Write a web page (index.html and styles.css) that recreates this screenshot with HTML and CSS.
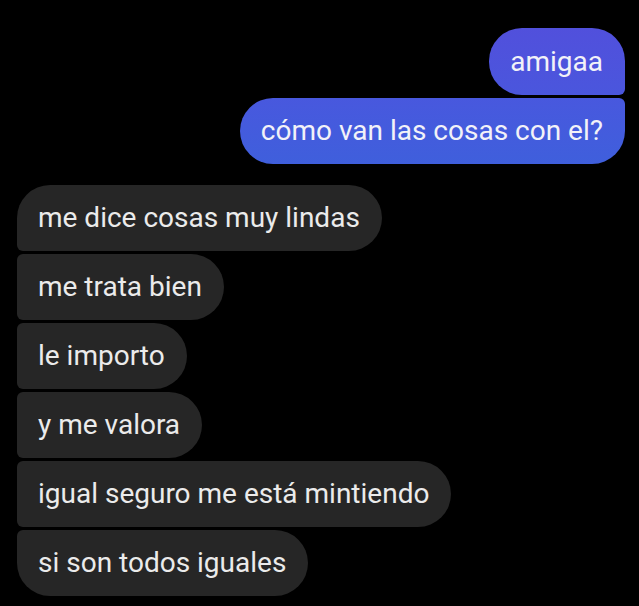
FILE: index.html
```html
<!DOCTYPE html>
<html>
<head>
<meta charset="utf-8">
<link rel="stylesheet" href="styles.css">
</head>
<body>
<div class="chat">
  <div class="group out">
    <div class="bubble out first">amigaa</div>
    <div class="bubble out last">cómo van las cosas con el?</div>
  </div>
  <div class="group in">
    <div class="bubble in first">me dice cosas muy lindas</div>
    <div class="bubble in mid">me trata bien</div>
    <div class="bubble in mid">le importo</div>
    <div class="bubble in mid">y me valora</div>
    <div class="bubble in mid">igual seguro me está mintiendo</div>
    <div class="bubble in last">si son todos iguales</div>
  </div>
</div>
</body>
</html>
```
FILE: styles.css
```css
html, body {
  margin: 0;
  padding: 0;
  background: #000;
  height: 100%;
  overflow: hidden;
}
.chat {
  display: flex;
  flex-direction: column;
  gap: 21px;
  padding: 28px 14px 0 17px;
  font-family: Roboto, "Noto Sans", sans-serif;
}
.group {
  display: flex;
  flex-direction: column;
  gap: 3px;
}
.group.out { align-items: flex-end; }
.group.in { align-items: flex-start; }
.bubble {
  font-size: 28px;
  line-height: 30px;
  padding: 18px 22px 18px 21px;
  color: #ebebeb;
  border-radius: 33px;
  white-space: nowrap;
}
.bubble.out {
  color: #f2f2f8;
}
.bubble.out.first {
  padding-top: 19px;
  background: linear-gradient(#5150dc, #4a56dd);
  border-bottom-right-radius: 6px;
}
.bubble.out.last {
  background: linear-gradient(#4858de, #3f5fdc);
  border-top-right-radius: 6px;
}
.bubble.in {
  background: #262626;
}
.bubble.in.first { border-bottom-left-radius: 6px; }
.bubble.in.mid { border-top-left-radius: 6px; border-bottom-left-radius: 6px; }
.bubble.in.last { border-top-left-radius: 6px; }
```
